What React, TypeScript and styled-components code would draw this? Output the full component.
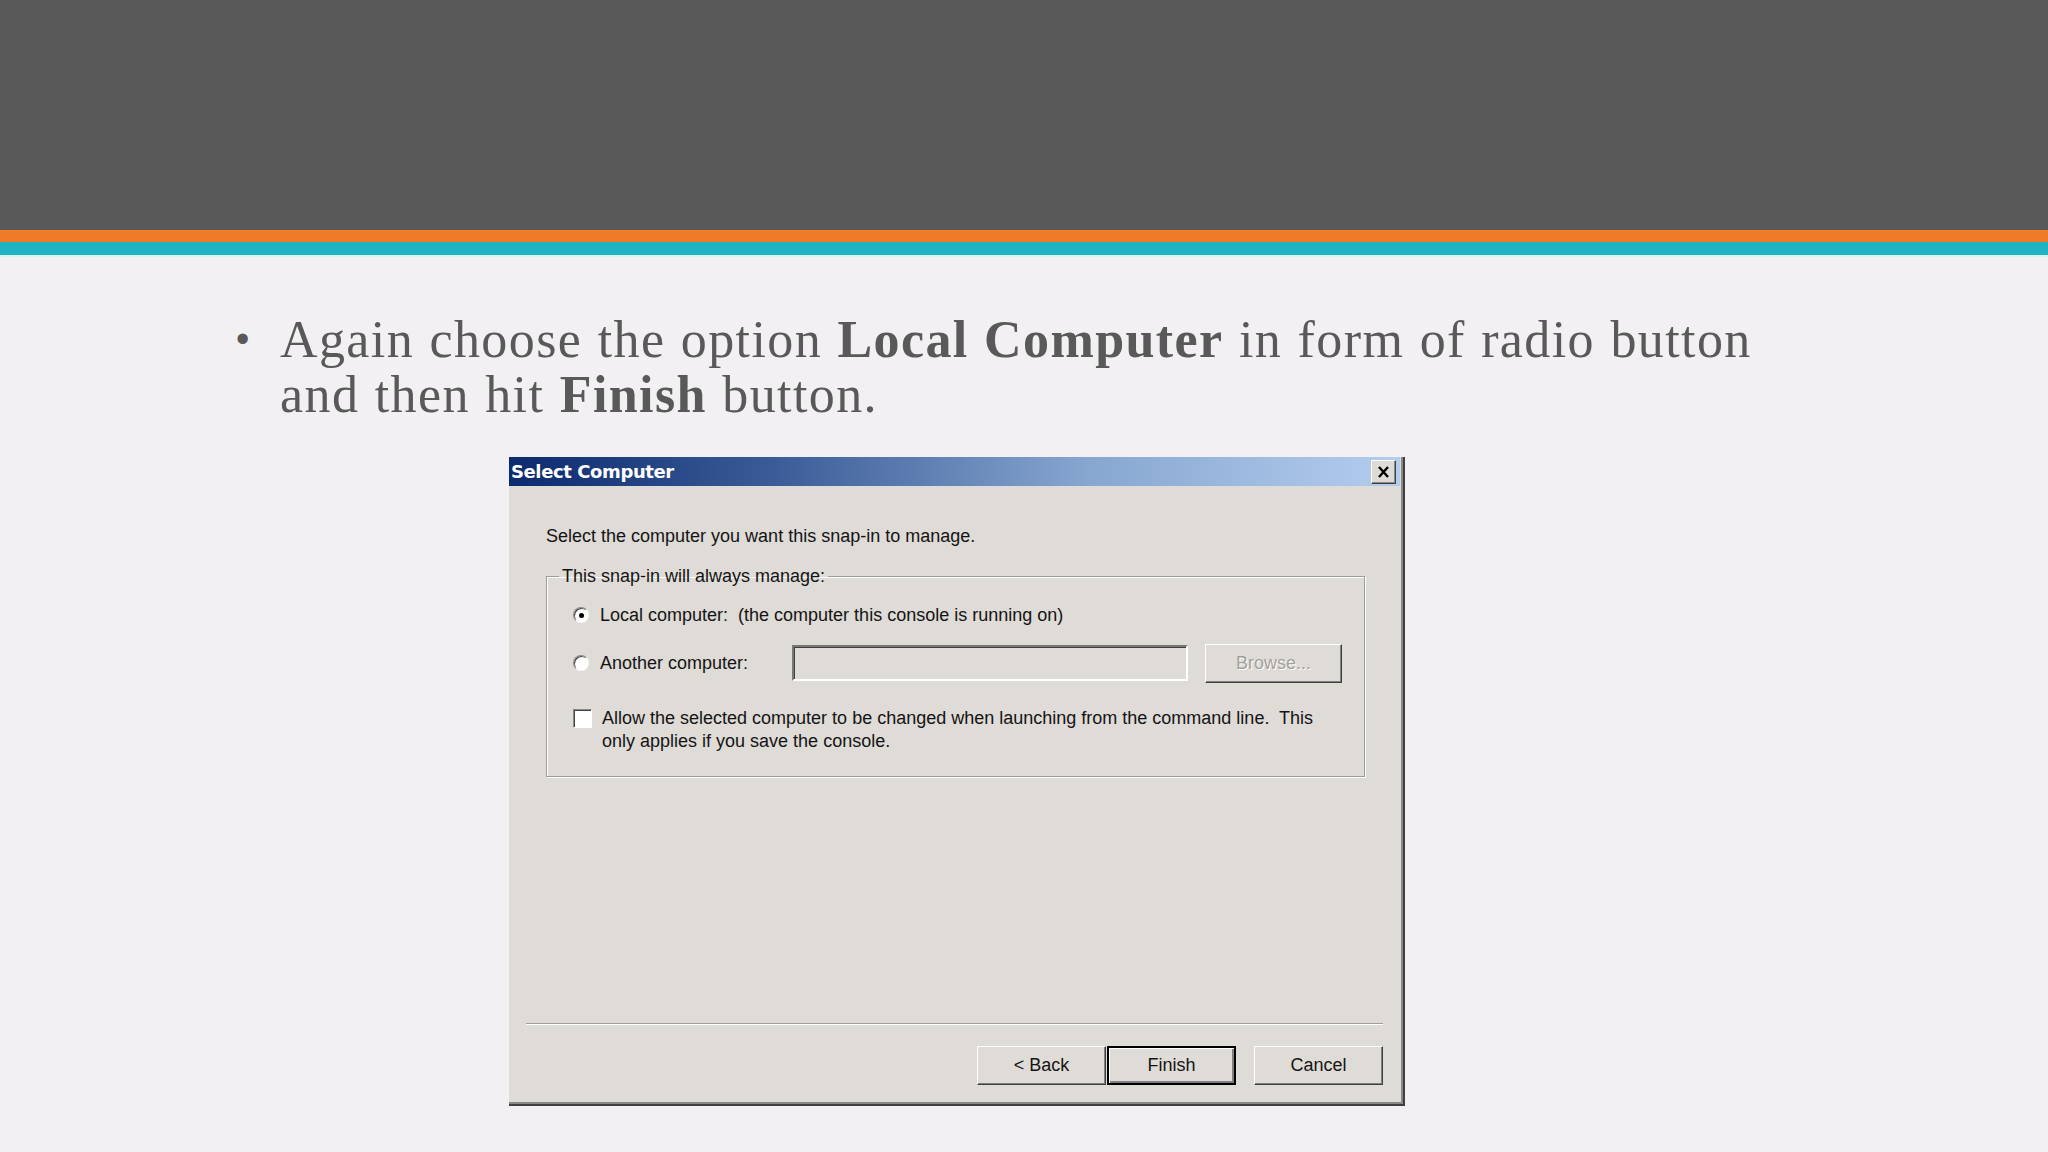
import React from 'react';
import styled, { createGlobalStyle } from 'styled-components';

const GlobalStyle = createGlobalStyle`
  html, body {
    margin: 0;
    padding: 0;
    background: #f2f0f2;
  }
  body {
    width: 2048px;
    height: 1152px;
    overflow: hidden;
  }
`;

const Slide = styled.div`
  width: 2048px;
  height: 1152px;
  display: flex;
  flex-direction: column;
  background: #f2f0f2;
`;

const Header = styled.div`
  height: 230px;
  background: #595959;
`;

const Stripe = styled.div<{ $color: string; $h: number }>`
  height: ${(p) => p.$h}px;
  background: ${(p) => p.$color};
`;

const Bullet = styled.div`
  display: grid;
  grid-template-columns: 44px 1540px;
  margin: 55px 0 0 236px;
  font-family: 'Liberation Serif', 'DejaVu Serif', serif;
  font-size: 52px;
  line-height: 55px;
  color: #595959;
  letter-spacing: 1.4px;
  word-spacing: 1px;
`;

const Dot = styled.span`
  font-family: 'Liberation Sans', sans-serif;
  font-size: 38px;
`;

const Dialog = styled.div`
  width: 896px;
  height: 649px;
  margin: 35px 0 0 509px;
  display: flex;
  flex-direction: column;
  box-sizing: border-box;
  background: #dfdbd7;
  border-right: 2px solid #404040;
  border-bottom: 2px solid #404040;
  box-shadow: inset -2px -2px 0 #8a8886;
  font-family: 'Liberation Sans', Arial, sans-serif;
  font-size: 18px;
  color: #141414;
`;

const TitleBar = styled.div`
  height: 29px;
  margin-right: 3px;
  display: flex;
  align-items: center;
  justify-content: space-between;
  background: linear-gradient(90deg, #0c2a6e 0%, #3b5c98 30%, #87a6d0 65%, #b3cdee 100%);
`;

const Title = styled.span`
  padding-left: 2px;
  font-family: 'DejaVu Sans', Tahoma, sans-serif;
  font-weight: bold;
  font-size: 18px;
  color: #fff;
  letter-spacing: -0.4px;
`;

const CloseButton = styled.div`
  width: 25px;
  height: 24px;
  margin-right: 4px;
  box-sizing: border-box;
  display: flex;
  align-items: center;
  justify-content: center;
  background: #dedbd6;
  border: 1px solid;
  border-color: #fff #404040 #404040 #fff;
  box-shadow: inset -1px -1px 0 #888;
`;

const Body = styled.div`
  flex: 1;
  display: flex;
  flex-direction: column;
  padding: 0 20px 0 37px;
`;

const Intro = styled.div`
  margin-top: 39px;
  line-height: 22px;
`;

const Group = styled.fieldset`
  width: 819px;
  height: 212px;
  box-sizing: border-box;
  margin: 18px 0 0 0;
  padding: 0 16px 0 26px;
  border: 1px solid #9e9c98;
  box-shadow: 1px 1px 0 #fff, inset 1px 1px 0 #fff;
  display: flex;
  flex-direction: column;
`;

const Legend = styled.legend`
  padding: 0 3px;
  margin-left: -14px;
  line-height: 22px;
`;

const OptionRow = styled.div<{ $h: number; $top?: number }>`
  height: ${(p) => p.$h}px;
  margin-top: ${(p) => p.$top ?? 0}px;
  display: flex;
  align-items: center;
`;

const Radio = styled.span<{ $checked?: boolean }>`
  width: 16px;
  height: 16px;
  flex: none;
  box-sizing: border-box;
  border-radius: 50%;
  border: 1px solid;
  border-color: #8a8884 #fafafa #fafafa #8a8884;
  background: #fff;
  box-shadow: inset 1px 1px 0 #444;
  display: flex;
  align-items: center;
  justify-content: center;
  margin-right: 11px;
  &::after {
    content: '';
    width: 5px;
    height: 5px;
    border-radius: 50%;
    background: ${(p) => (p.$checked ? '#000' : 'transparent')};
  }
`;

const Label = styled.span<{ $w?: number }>`
  white-space: pre;
  ${(p) => (p.$w ? `width: ${p.$w}px;` : '')}
`;

const TextBox = styled.div`
  width: 396px;
  height: 36px;
  box-sizing: border-box;
  border: 2px solid;
  border-color: #7a7874 #fff #fff #7a7874;
  box-shadow: inset 1px 1px 0 #404040;
  background: #dfdbd7;
`;

const Button = styled.div<{ $default?: boolean; $disabled?: boolean }>`
  width: 129px;
  height: 39px;
  box-sizing: border-box;
  display: flex;
  align-items: center;
  justify-content: center;
  background: #dfdbd7;
  border: ${(p) => (p.$default ? '2px solid #000' : '1px solid')};
  border-color: ${(p) => (p.$default ? '#000' : '#fff #404040 #404040 #fff')};
  box-shadow: ${(p) =>
    p.$default
      ? 'inset 1px 1px 0 #fff, inset -2px -2px 0 #808080'
      : 'inset -1px -1px 0 #808080'};
  color: ${(p) => (p.$disabled ? '#a3a19e' : '#141414')};
  text-shadow: ${(p) => (p.$disabled ? '1px 1px 0 #fff' : 'none')};
`;

const BrowseButton = styled(Button)`
  width: 137px;
  margin-left: 17px;
`;

const CheckRow = styled.div`
  display: flex;
  align-items: flex-start;
  margin-top: 11px;
`;

const CheckBox = styled.span`
  width: 19px;
  height: 19px;
  flex: none;
  box-sizing: border-box;
  border: 1px solid;
  border-color: #8a8884 #fff #fff #8a8884;
  box-shadow: inset 1px 1px 0 #444;
  background: #fff;
  margin: 2px 10px 0 0;
`;

const CheckText = styled.span`
  line-height: 23px;
  white-space: pre;
`;

const Separator = styled.div`
  margin: auto 0 0 -20px;
  width: 857px;
  height: 2px;
  border-top: 1px solid #a09e9a;
  border-bottom: 1px solid #fff;
  box-sizing: border-box;
`;

const Footer = styled.div`
  display: flex;
  justify-content: flex-end;
  align-items: center;
  padding: 21px 0 19px;
  gap: 1px;
`;

const CancelButton = styled(Button)`
  margin-left: 17px;
`;

export default function App() {
  return (
    <>
      <GlobalStyle />
      <Slide>
        <Header />
        <Stripe $color="#ef7a27" $h={12} />
        <Stripe $color="#20b4c2" $h={13} />
        <Stripe $color="#d9f2f2" $h={2} />
        <Bullet>
          <Dot>•</Dot>
          <span>
            Again choose the option <b>Local Computer</b> in form of radio button and then hit{' '}
            <b>Finish</b> button.
          </span>
        </Bullet>
        <Dialog>
          <TitleBar>
            <Title>Select Computer</Title>
            <CloseButton>
              <svg width="13" height="12" viewBox="0 0 13 12">
                <path d="M2 1 L11 11 M11 1 L2 11" stroke="#000" strokeWidth="2.4" />
              </svg>
            </CloseButton>
          </TitleBar>
          <Body>
            <Intro>Select the computer you want this snap-in to manage.</Intro>
            <Group>
              <Legend>This snap-in will always manage:</Legend>
              <OptionRow $h={30} $top={13}>
                <Radio $checked />
                <Label>Local computer:  (the computer this console is running on)</Label>
              </OptionRow>
              <OptionRow $h={66}>
                <Radio />
                <Label $w={192}>Another computer:</Label>
                <TextBox />
                <BrowseButton $disabled>Browse...</BrowseButton>
              </OptionRow>
              <CheckRow>
                <CheckBox />
                <CheckText>
                  {'Allow the selected computer to be changed when launching from the command line.  This\nonly applies if you save the console.'}
                </CheckText>
              </CheckRow>
            </Group>
            <Separator />
            <Footer>
              <Button>&lt; Back</Button>
              <Button $default>Finish</Button>
              <CancelButton>Cancel</CancelButton>
            </Footer>
          </Body>
        </Dialog>
      </Slide>
    </>
  );
}
